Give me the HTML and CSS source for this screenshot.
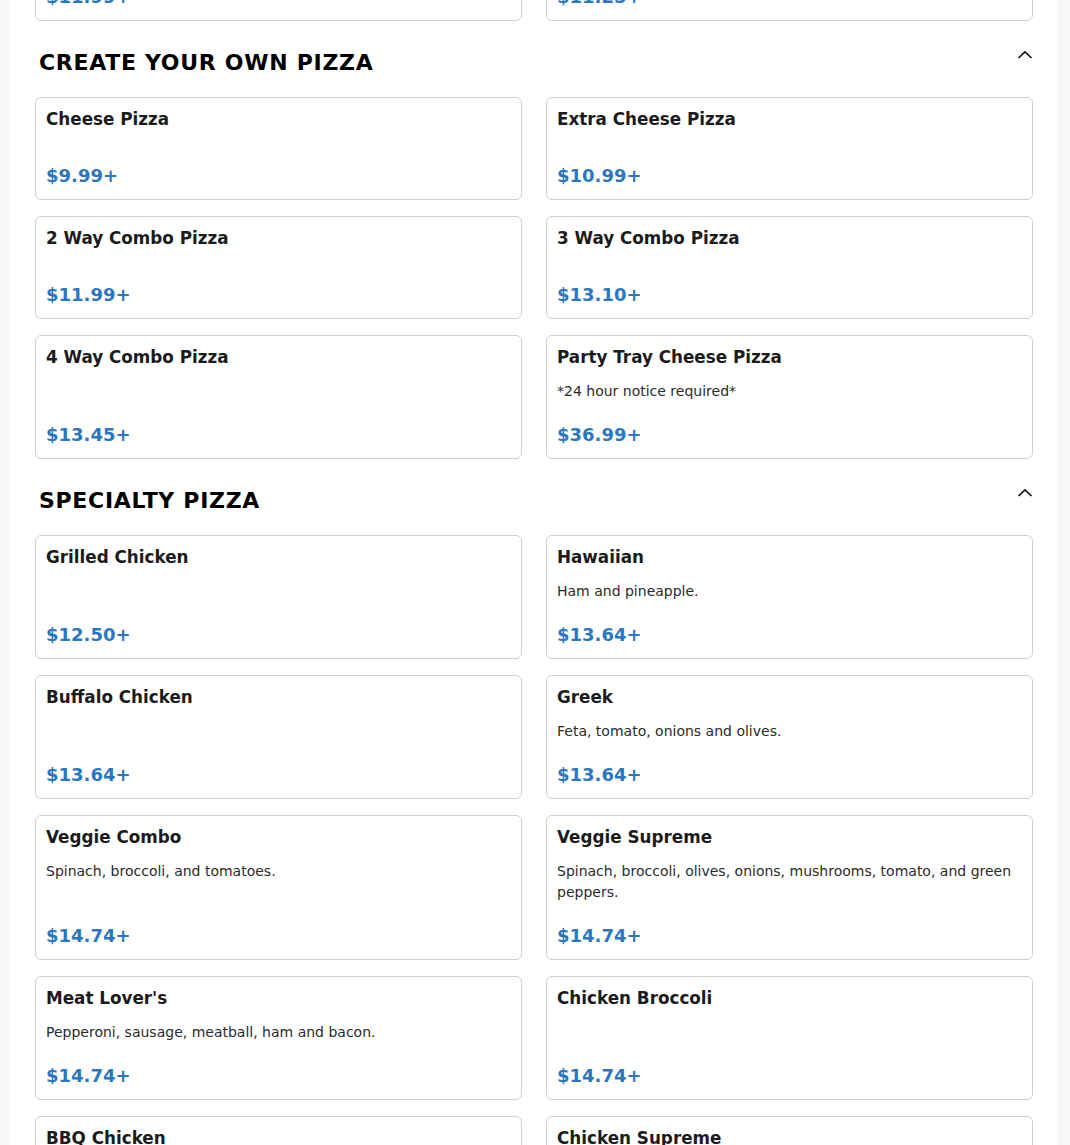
FILE: index.html
```html
<!DOCTYPE html>
<html lang="en">
<head>
<meta charset="utf-8">
<title>Menu</title>
<link rel="stylesheet" href="styles.css">
</head>
<body>
<div class="panel">
  <section class="section">
    <div class="grid">
      <div class="card"><div class="title">Pepperoni Slice</div><div class="desc"></div><div class="price">$11.99+</div></div>
      <div class="card"><div class="title">Cheese Slice</div><div class="desc"></div><div class="price">$11.25+</div></div>
    </div>
  </section>

  <section class="section">
    <div class="sec-head">
      <h2 class="sec-title">CREATE YOUR OWN PIZZA</h2>
      <svg class="chev" width="16" height="10" viewBox="0 0 16 10"><path d="M1.5 8 L8 2 L14.5 8" fill="none" stroke="#111" stroke-width="1.7"/></svg>
    </div>
    <div class="grid">
      <div class="card"><div class="title">Cheese Pizza</div><div class="desc"></div><div class="price">$9.99+</div></div>
      <div class="card"><div class="title">Extra Cheese Pizza</div><div class="desc"></div><div class="price">$10.99+</div></div>
      <div class="card"><div class="title">2 Way Combo Pizza</div><div class="desc"></div><div class="price">$11.99+</div></div>
      <div class="card"><div class="title">3 Way Combo Pizza</div><div class="desc"></div><div class="price">$13.10+</div></div>
      <div class="card"><div class="title">4 Way Combo Pizza</div><div class="desc"></div><div class="price">$13.45+</div></div>
      <div class="card"><div class="title">Party Tray Cheese Pizza</div><div class="desc">*24 hour notice required*</div><div class="price">$36.99+</div></div>
    </div>
  </section>

  <section class="section">
    <div class="sec-head">
      <h2 class="sec-title">SPECIALTY PIZZA</h2>
      <svg class="chev" width="16" height="10" viewBox="0 0 16 10"><path d="M1.5 8 L8 2 L14.5 8" fill="none" stroke="#111" stroke-width="1.7"/></svg>
    </div>
    <div class="grid">
      <div class="card"><div class="title">Grilled Chicken</div><div class="desc"></div><div class="price">$12.50+</div></div>
      <div class="card"><div class="title">Hawaiian</div><div class="desc">Ham and pineapple.</div><div class="price">$13.64+</div></div>
      <div class="card"><div class="title">Buffalo Chicken</div><div class="desc"></div><div class="price">$13.64+</div></div>
      <div class="card"><div class="title">Greek</div><div class="desc">Feta, tomato, onions and olives.</div><div class="price">$13.64+</div></div>
      <div class="card"><div class="title">Veggie Combo</div><div class="desc">Spinach, broccoli, and tomatoes.</div><div class="price">$14.74+</div></div>
      <div class="card"><div class="title">Veggie Supreme</div><div class="desc">Spinach, broccoli, olives, onions, mushrooms, tomato, and green peppers.</div><div class="price">$14.74+</div></div>
      <div class="card"><div class="title">Meat Lover's</div><div class="desc">Pepperoni, sausage, meatball, ham and bacon.</div><div class="price">$14.74+</div></div>
      <div class="card"><div class="title">Chicken Broccoli</div><div class="desc"></div><div class="price">$14.74+</div></div>
      <div class="card"><div class="title">BBQ Chicken</div><div class="desc"></div><div class="price">$14.74+</div></div>
      <div class="card"><div class="title">Chicken Supreme</div><div class="desc"></div><div class="price">$14.74+</div></div>
    </div>
  </section>
</div>
</body>
</html>
```

FILE: styles.css
```css
html, body {
  margin: 0;
  padding: 0;
}
body {
  background: #f7f7f7;
  font-family: "DejaVu Sans", Verdana, sans-serif;
  color: #1b1b1b;
  overflow: hidden;
}
.panel {
  background: #ffffff;
  width: 998px;
  margin: -82px 0 0 10px;
  padding: 0 25px 40px 25px;
}
.sec-head {
  display: flex;
  justify-content: space-between;
  align-items: flex-start;
  height: 76px;
}
.sec-title {
  margin: 29px 0 0 4px;
  font-size: 22px;
  line-height: 26px;
  font-weight: bold;
  letter-spacing: 0.7px;
  color: #000;
}
.chev {
  margin: 29px 0 0 0;
}
.grid {
  display: grid;
  grid-template-columns: 1fr 1fr;
  column-gap: 24px;
  row-gap: 16px;
}
.card {
  border: 1px solid #cfcfcf;
  border-radius: 6px;
  padding: 11px 10px 10px 10px;
  display: flex;
  flex-direction: column;
}
.title {
  font-size: 16.8px;
  line-height: 20px;
  font-weight: bold;
  color: #1b1b1b;
}
.desc {
  margin-top: 14px;
  font-size: 14px;
  line-height: 21px;
  color: #2b2b2b;
}
.price {
  margin-top: auto;
  padding-top: 20px;
  font-size: 18px;
  line-height: 26px;
  font-weight: bold;
  color: #2b77bf;
}
```
